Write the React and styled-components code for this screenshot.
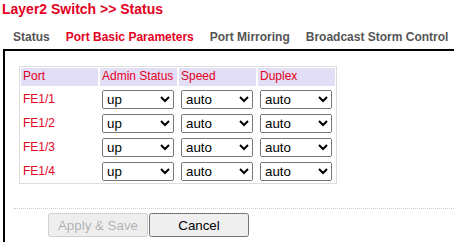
import styled, { createGlobalStyle } from "styled-components";

const ports = ["FE1/1", "FE1/2", "FE1/3", "FE1/4"];
const tabs = ["Status", "Port Basic Parameters", "Port Mirroring", "Broadcast Storm Control"];

const App = () => {
  return (
    <>
      <GlobalStyle />
      <Title>Layer2 Switch &gt;&gt; Status</Title>
      <Tabs>
        {tabs.map((t, i) => (
          <Tab key={t} active={i === 1}>
            {t}
          </Tab>
        ))}
      </Tabs>
      <Panel>
        <PortTable>
          <HeadCell>Port</HeadCell>
          <HeadCell>Admin Status</HeadCell>
          <HeadCell>Speed</HeadCell>
          <HeadCell>Duplex</HeadCell>
          {ports.map((p) => (
            <Row key={p}>
              <Cell>
                <PortName>{p}</PortName>
              </Cell>
              <Cell>
                <Select defaultValue="up">
                  <option value="up">up</option>
                  <option value="down">down</option>
                </Select>
              </Cell>
              <Cell>
                <Select defaultValue="auto">
                  <option value="auto">auto</option>
                  <option value="10">10M</option>
                  <option value="100">100M</option>
                </Select>
              </Cell>
              <Cell>
                <Select defaultValue="auto">
                  <option value="auto">auto</option>
                  <option value="full">full</option>
                  <option value="half">half</option>
                </Select>
              </Cell>
            </Row>
          ))}
        </PortTable>
        <Footer>
          <Button disabled>Apply &amp; Save</Button>
          <Button>Cancel</Button>
        </Footer>
      </Panel>
    </>
  );
};

export default App;

const GlobalStyle = createGlobalStyle`
  html, body {
    margin: 0;
    padding: 0;
    overflow: hidden;
    background: #fff;
    font-family: Arial, "Liberation Sans", sans-serif;
  }
`;

const Title = styled.div`
  padding: 1px 0 0 2px;
  font-size: 14px;
  line-height: 16px;
  font-weight: 700;
  color: #e4001e;
`;

const Tabs = styled.div`
  display: flex;
  padding: 13px 0 5px 5px;
  line-height: 14px;
  white-space: nowrap;
`;

const Tab = styled.span`
  padding: 0 8px;
  font-size: 12px;
  font-weight: 700;
  color: ${(props) => (props.active ? "#e4001e" : "#555")};
`;

const Panel = styled.div`
  margin-left: 3px;
  height: calc(100vh - 49px);
  box-sizing: border-box;
  border-top: 2px solid #000;
  border-left: 2px solid #000;
  padding: 15px 0 0 9px;
`;

const PortTable = styled.div`
  display: inline-grid;
  grid-template-columns: repeat(4, 77px);
  column-gap: 2px;
  row-gap: 2px;
  margin-left: 5px;
  padding: 1px;
  border: 1px solid #ddd;
`;

const HeadCell = styled.div`
  height: 16px;
  padding: 0 2px 2px;
  background: #e1def6;
  color: #e4001e;
  font-size: 12px;
  line-height: 16px;
  white-space: nowrap;
`;

const Row = styled.div`
  display: contents;
`;

const Cell = styled.div`
  height: 22px;
  padding: 0 2px;
  display: flex;
  align-items: center;
`;

const PortName = styled.span`
  color: #e4001e;
  font-size: 12px;
`;

const Select = styled.select`
  width: 72px;
  height: 19px;
  font-family: Arial, "Liberation Sans", sans-serif;
  font-size: 13.333px;
`;

const Footer = styled.div`
  display: flex;
  gap: 1px;
  margin-top: 24px;
  padding: 4px 0 0 34px;
  border-top: 1px dotted #ccc;
`;

const Button = styled.button`
  width: 100px;
  height: 24px;
  font-family: Arial, "Liberation Sans", sans-serif;
  font-size: 13.333px;
`;
